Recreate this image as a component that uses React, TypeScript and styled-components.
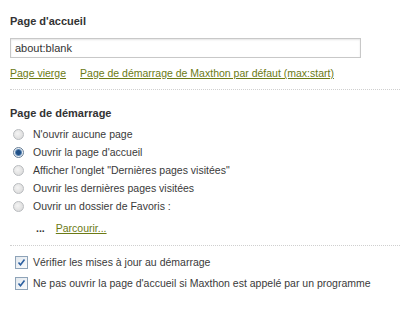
import React, { useState } from 'react';
import styled, { createGlobalStyle } from 'styled-components';

const GlobalStyle = createGlobalStyle`
  html, body {
    margin: 0;
    padding: 0;
    background: #fff;
  }
  body {
    font-family: "Liberation Sans", Arial, sans-serif;
    font-size: 10.5px;
    color: #3a3a3a;
  }
`

const Page = styled.div`
  width: 400px;
  height: 315px;
  overflow: hidden;
  padding-top: 14px;
  box-sizing: border-box;
`

const Section = styled.div<{ $top?: number }>`
  padding: ${p => p.$top ?? 0}px 0 0 10px;
`

const Heading = styled.div<{ $after: number }>`
  font-weight: bold;
  font-size: 11px;
  color: #333;
  height: 14px;
  line-height: 14px;
  margin-bottom: ${p => p.$after}px;
`

const TextInput = styled.input`
  display: block;
  width: 351px;
  height: 20px;
  box-sizing: border-box;
  border: 1px solid #c8c8c8;
  box-shadow: inset 0 1px 2px #e4e4e4;
  padding: 0 4px;
  font-family: inherit;
  font-size: 11px;
  color: #333;
  outline: none;
`

const LinkRow = styled.div`
  display: flex;
  gap: 14px;
  margin-top: 8px;
  line-height: 14px;
`

const Link = styled.a`
  color: #6b7a14;
  text-decoration: underline;
  cursor: pointer;
`

const Divider = styled.div<{ $gap: number }>`
  margin: ${p => p.$gap}px 0 0 10px;
  border-top: 1px dotted #cfcfcf;
`

const OptionList = styled.div`
  display: flex;
  flex-direction: column;
  gap: 4px;
  padding-left: 3px;
`

const Option = styled.label`
  display: flex;
  align-items: center;
  gap: 9px;
  height: 14px;
  line-height: 14px;
  cursor: pointer;
`

const RadioDot = styled.span<{ $on: boolean }>`
  width: 9px;
  height: 9px;
  border-radius: 50%;
  border: 1px solid ${p => (p.$on ? '#6a7f96' : '#b9bcbf')};
  background: ${p => (p.$on
    ? 'radial-gradient(circle, #1f4f86 0 2px, #5b86b4 3px, #e8eef4 4px)'
    : 'radial-gradient(circle at 40% 40%, #f4f4f4, #d6d6d6)')};
  flex-shrink: 0;
`

const BrowseRow = styled.div`
  display: flex;
  gap: 11px;
  margin: 8px 0 0 26px;
  line-height: 14px;
`

const Dots = styled.span`
  font-weight: bold;
  color: #333;
`

const CheckList = styled.div`
  display: flex;
  flex-direction: column;
  gap: 7px;
  padding: 9px 0 0 15px;
`

const CheckBox = styled.span`
  width: 11px;
  height: 11px;
  border: 1px solid #8ea3b8;
  background: linear-gradient(135deg, #e2e8ee, #fafbfc);
  display: flex;
  align-items: center;
  justify-content: center;
  flex-shrink: 0;
`

const CheckRow = styled.label`
  display: flex;
  align-items: center;
  gap: 5px;
  height: 14px;
  line-height: 14px;
`

const startOptions = [
  'N\'ouvrir aucune page',
  'Ouvrir la page d\'accueil',
  'Afficher l\'onglet "Dernières pages visitées"',
  'Ouvrir les dernières pages visitées',
  'Ouvrir un dossier de Favoris :',
]

const checks = [
  'Vérifier les mises à jour au démarrage',
  'Ne pas ouvrir la page d\'accueil si Maxthon est appelé par un programme',
]

const Tick = () => (
  <svg width="9" height="9" viewBox="0 0 9 9">
    <path d="M1.5 4.5 L3.5 6.8 L7.5 1.5" fill="none" stroke="#2b5fa0" strokeWidth="1.6"/>
  </svg>
)

const App = () => {
  const [start, setStart] = useState(1)

  return (
    <Page>
      <GlobalStyle/>
      <Section>
        <Heading $after={ 10 }>Page d'accueil</Heading>
        <TextInput defaultValue="about:blank"/>
        <LinkRow>
          <Link>Page vierge</Link>
          <Link>Page de démarrage de Maxthon par défaut (max:start)</Link>
        </LinkRow>
      </Section>
      <Divider $gap={ 9 }/>

      <Section $top={ 16 }>
        <Heading $after={ 7 }>Page de démarrage</Heading>
        <OptionList>
          { startOptions.map((text, i) => (
            <Option key={ i } onClick={ () => setStart(i) }>
              <RadioDot $on={ start === i }/>
              <span>{ text }</span>
            </Option>
          )) }
        </OptionList>
        <BrowseRow>
          <Dots>...</Dots>
          <Link>Parcourir...</Link>
        </BrowseRow>
      </Section>
      <Divider $gap={ 10 }/>

      <CheckList>
        { checks.map(text => (
          <CheckRow key={ text }>
            <CheckBox><Tick/></CheckBox>
            <span>{ text }</span>
          </CheckRow>
        )) }
      </CheckList>
    </Page>
  );
};

export default App;
